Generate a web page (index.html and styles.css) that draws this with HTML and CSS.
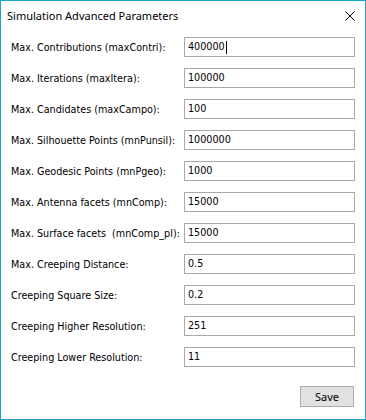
FILE: index.html
```html
<!DOCTYPE html>
<html>
<head>
  <title>Simulation Advanced Parameters</title>
  <link rel="stylesheet" href="styles.css">
</head>
<body>
  <div class="window">
    <div class="titlebar">
      <span class="title">Simulation Advanced Parameters</span>
      <svg class="close" width="10" height="10" viewBox="0 0 10 10">
        <path d="M0.5 0.5 L9.5 9.5 M9.5 0.5 L0.5 9.5" stroke="#000" stroke-width="1" fill="none"/>
      </svg>
    </div>
    <div class="form">
      <div class="row">
        <label>Max. Contributions (maxContri):</label>
        <div class="field">400000<span class="caret"></span></div>
      </div>
      <div class="row">
        <label>Max. Iterations (maxItera):</label>
        <div class="field">100000</div>
      </div>
      <div class="row">
        <label>Max. Candidates (maxCampo):</label>
        <div class="field">100</div>
      </div>
      <div class="row">
        <label>Max. Silhouette Points (mnPunsil):</label>
        <div class="field">1000000</div>
      </div>
      <div class="row">
        <label>Max. Geodesic Points (mnPgeo):</label>
        <div class="field">1000</div>
      </div>
      <div class="row">
        <label>Max. Antenna facets (mnComp):</label>
        <div class="field">15000</div>
      </div>
      <div class="row">
        <label>Max. Surface facets&nbsp; (mnComp_pl):</label>
        <div class="field">15000</div>
      </div>
      <div class="row">
        <label>Max. Creeping Distance:</label>
        <div class="field">0.5</div>
      </div>
      <div class="row">
        <label>Creeping Square Size:</label>
        <div class="field">0.2</div>
      </div>
      <div class="row">
        <label>Creeping Higher Resolution:</label>
        <div class="field">251</div>
      </div>
      <div class="row">
        <label>Creeping Lower Resolution:</label>
        <div class="field">11</div>
      </div>
    </div>
    <div class="actions">
      <button class="save">Save</button>
    </div>
  </div>
</body>
</html>
```

FILE: styles.css
```css
body {
  margin: 0;
  background: #fff;
}
.window {
  box-sizing: border-box;
  width: 366px;
  height: 420px;
  border: 1px solid #18a3c8;
  background: #fff;
  font-family: 'DejaVu Sans Condensed', 'DejaVu Sans', sans-serif;
  font-size: 10.7px;
  color: #000;
}
.titlebar {
  display: flex;
  align-items: center;
  justify-content: space-between;
  height: 29px;
  padding: 0 10px 0 6px;
}
.title {
  font-family: 'Noto Sans', sans-serif;
  font-size: 11px;
}
.close {
  display: block;
}
.form {
  display: flex;
  flex-direction: column;
  gap: 11px;
  padding: 7px 10px 0 10px;
}
.row {
  display: flex;
  align-items: center;
  height: 20px;
}
.row label {
  width: 173px;
  flex-shrink: 0;
  white-space: nowrap;
}
.field {
  box-sizing: border-box;
  width: 171px;
  height: 20px;
  border: 1px solid #a9a9a9;
  padding: 0 3px;
  line-height: 18px;
  display: flex;
  align-items: center;
}
.caret {
  display: inline-block;
  width: 1px;
  height: 13px;
  background: #000;
  margin-left: 1px;
}
.actions {
  display: flex;
  justify-content: flex-end;
  padding: 19px 11px 0 0;
}
.save {
  box-sizing: border-box;
  width: 54px;
  height: 21px;
  background: #e1e1e1;
  border: 1px solid #adadad;
  font-family: 'Noto Sans', sans-serif;
  font-size: 11px;
  padding: 0;
  color: #000;
}
```
